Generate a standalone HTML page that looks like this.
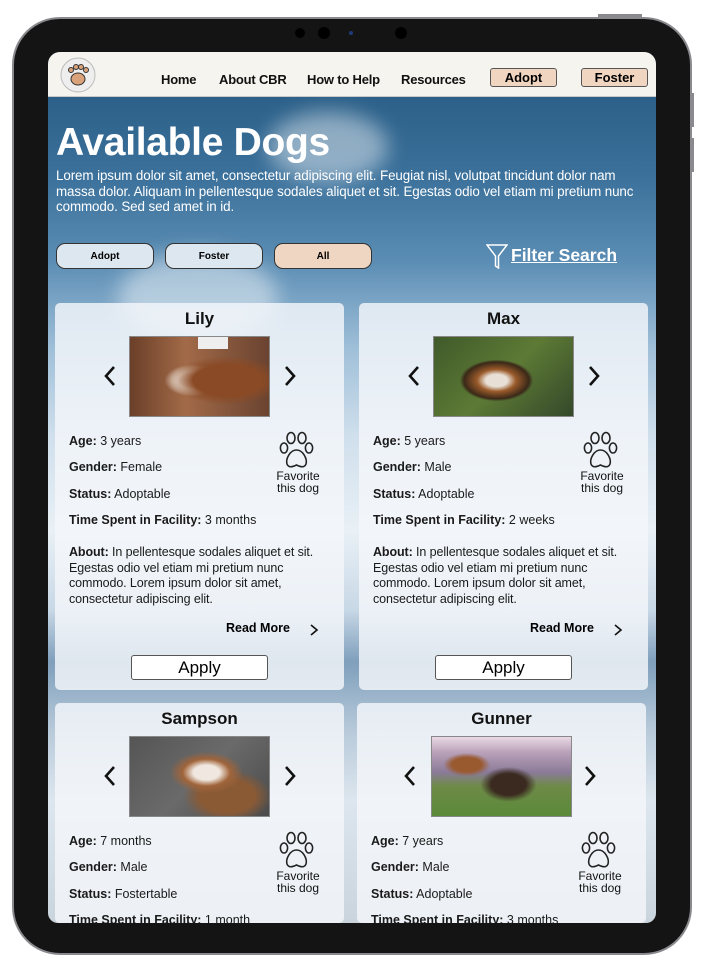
<!DOCTYPE html>
<html><head><meta charset="utf-8"><style>
*{margin:0;padding:0;box-sizing:border-box}
html,body{width:706px;height:968px;background:#fff;overflow:hidden;font-family:"Liberation Sans",sans-serif;position:relative}
.dev{position:absolute;left:12px;top:17px;width:680px;height:938px;border-radius:48px;background:#141414;border:2px solid #8a8a8e}
.btn-side{position:absolute;background:#8a8a8e}
.screen{position:absolute;left:48px;top:52px;width:608px;height:871px;border-radius:12px 12px 10px 10px;overflow:hidden;
background:linear-gradient(180deg,#24577f 0%,#3a709a 14%,#5b8db4 24%,#9fbfd8 34%,#cfdfec 44%,#e9f0f6 55%,#c8d8e6 64%,#7f9fbc 70%,#b8cada 78%,#dde6ee 86%,#c9d4dc 100%)}
.cloud{position:absolute;border-radius:50%;background:rgba(255,255,255,.45);filter:blur(10px)}
.nav{position:absolute;left:0;top:0;width:608px;height:45px;background:#f6f4ee;border-bottom:1px solid #c9c9c9}
.nav a{position:absolute;top:20px;font-size:13px;font-weight:bold;color:#111;letter-spacing:-.2px}
.nb{position:absolute;top:16px;width:67px;height:19px;background:#f0d6c0;border:1px solid #555;border-radius:3px;font-size:13px;font-weight:bold;text-align:center;line-height:17px}
h1{position:absolute;left:8px;top:69px;font-size:39px;color:#fff;font-weight:bold;letter-spacing:-.3px}
.intro{position:absolute;left:8px;top:116px;width:598px;font-size:13.4px;line-height:15.5px;color:#fff;letter-spacing:-.1px;white-space:nowrap}
.pill{position:absolute;top:191px;width:98px;height:26px;border:1px solid #333;border-radius:9px;background:#dde7f0;font-size:10px;font-weight:bold;text-align:center;line-height:26px}
.fs{position:absolute;left:463px;top:193px;font-size:17.5px;font-weight:bold;color:#fff;text-decoration:underline}
.card{position:absolute;width:289px;height:387px;background:rgba(244,247,250,.82);border-radius:5px;overflow:hidden}
.card.bt{height:220px}
.card .nm{position:absolute;left:0;width:100%;top:6px;text-align:center;font-size:17px;font-weight:bold;color:#111}
.card .ph{position:absolute;left:74px;top:33px;width:141px;height:81px;border:1px solid #888;overflow:hidden}
.card .ar{position:absolute;top:60px;width:16px;height:26px}
.card .inf{position:absolute;left:14px;font-size:12.5px;color:#1a1a1a;white-space:nowrap}
.card b{font-weight:bold}
.card .ab{position:absolute;left:14px;top:242px;width:272px;font-size:12.5px;line-height:15.5px;color:#1a1a1a;letter-spacing:-.1px}
.card .rm{position:absolute;left:171px;top:318px;font-size:12.5px;font-weight:bold}
.card .ch{position:absolute;left:254px;top:320px}
.card .ap{position:absolute;left:76px;top:352px;width:137px;height:25px;background:#fff;border:1px solid #555;border-radius:3px;text-align:center;font-size:17px;line-height:24px}
.card .paw{position:absolute;left:224px;top:128px}
.card .fv{position:absolute;left:217px;top:168px;width:52px;text-align:center;font-size:12px;line-height:11.5px;color:#111}
</style></head><body>
<div class="dev"></div>
<div class="btn-side" style="left:598px;top:14px;width:44px;height:4px"></div>
<div class="btn-side" style="left:690px;top:93px;width:4px;height:34px"></div>
<div class="btn-side" style="left:690px;top:138px;width:4px;height:34px"></div>
<div style="position:absolute;left:295px;top:28px;width:10px;height:10px;border-radius:50%;background:#000"></div>
<div style="position:absolute;left:318px;top:27px;width:12px;height:12px;border-radius:50%;background:#000"></div>
<div style="position:absolute;left:349px;top:31px;width:4px;height:4px;border-radius:50%;background:#1f3a7a"></div>
<div style="position:absolute;left:395px;top:27px;width:12px;height:12px;border-radius:50%;background:#000"></div>

<svg width="0" height="0" style="position:absolute;left:0;top:0"><defs>
<symbol id="paw" viewBox="0 0 36 42"><g fill="none" stroke="#222" stroke-width="1.6"><ellipse cx="12" cy="7" rx="4" ry="5.5"/><ellipse cx="23" cy="7" rx="4" ry="5.5"/><ellipse cx="5" cy="17" rx="3.6" ry="5"/><ellipse cx="30" cy="17" rx="3.6" ry="5"/><path d="M17.5 19C11 19 6.5 28 8 33C9.5 37 13.5 36 17.5 34C21.5 36 25.5 37 27 33C28.5 28 24 19 17.5 19Z"/></g></symbol>
<symbol id="la" viewBox="0 0 16 26"><path d="M12 4L4 13L12 22" fill="none" stroke="#111" stroke-width="2.6"/></symbol>
<symbol id="ra" viewBox="0 0 16 26"><path d="M4 4L12 13L4 22" fill="none" stroke="#111" stroke-width="2.6"/></symbol>
</defs></svg>

<div class="screen">
 <div class="cloud" style="left:220px;top:60px;width:120px;height:70px"></div>
 <div class="cloud" style="left:70px;top:200px;width:160px;height:90px"></div>
 <div class="nav">
  <svg style="position:absolute;left:8px;top:4px" width="44" height="38" viewBox="0 0 44 38"><circle cx="22" cy="19" r="17" fill="#eee" stroke="#bbb"/><ellipse cx="22" cy="23" rx="7" ry="6" fill="#d9a27a" stroke="#333"/><circle cx="15" cy="14" r="2.5" fill="#d9a27a" stroke="#333"/><circle cx="20" cy="11" r="2.5" fill="#d9a27a" stroke="#333"/><circle cx="25" cy="11" r="2.5" fill="#d9a27a" stroke="#333"/><circle cx="30" cy="14" r="2.5" fill="#d9a27a" stroke="#333"/></svg>
  <a style="left:113px">Home</a><a style="left:171px">About CBR</a><a style="left:259px">How to Help</a><a style="left:353px">Resources</a>
  <div class="nb" style="left:442px">Adopt</div><div class="nb" style="left:533px">Foster</div>
 </div>
 <h1>Available Dogs</h1>
 <div class="intro">Lorem ipsum dolor sit amet, consectetur adipiscing elit. Feugiat nisl, volutpat tincidunt dolor nam<br>massa dolor. Aliquam in pellentesque sodales aliquet et sit. Egestas odio vel etiam mi pretium nunc<br>commodo. Sed sed amet in id.</div>
 <div class="pill" style="left:8px">Adopt</div>
 <div class="pill" style="left:117px">Foster</div>
 <div class="pill" style="left:226px;background:#efd6c2">All</div>
 <svg style="position:absolute;left:438px;top:192px" width="22" height="25" viewBox="0 0 22 25"><path d="M1 1H21L12.5 12V24L9.5 22V12Z" fill="none" stroke="#fff" stroke-width="1.5"/></svg>
 <div class="fs">Filter Search</div>

<div class="card" style="left:7px;top:251px">
 <div class="nm">Lily</div>
 <div class="ph" style="background:radial-gradient(ellipse at 70% 55%,#8a4a25 0 25%,transparent 40%),radial-gradient(ellipse at 45% 55%,#e8dcd0 0 14%,transparent 26%),linear-gradient(90deg,#6b3f28,#a26a48 40%,#6a4330)"><div style="position:absolute;left:68px;top:0;width:30px;height:12px;background:#eee"></div></div>
 <svg class="ar" style="left:47px"><use href="#la"/></svg><svg class="ar" style="left:227px"><use href="#ra"/></svg>
 <div class="inf" style="top:131px"><b>Age:</b> 3 years</div>
 <div class="inf" style="top:157px"><b>Gender:</b> Female</div>
 <div class="inf" style="top:184px"><b>Status:</b> Adoptable</div>
 <div class="inf" style="top:210px"><b>Time Spent in Facility:</b> 3 months</div>
 <svg class="paw" width="36" height="42"><use href="#paw"/></svg>
 <div class="fv">Favorite this dog</div>
 <div class="ab"><b>About:</b> In pellentesque sodales aliquet et sit. Egestas odio vel etiam mi pretium nunc commodo. Lorem ipsum dolor sit amet, consectetur adipiscing elit.</div>
 <div class="rm">Read More</div><svg class="ch" width="10" height="14"><path d="M2 2L8 7L2 12" fill="none" stroke="#111" stroke-width="1.6"/></svg>
 <div class="ap">Apply</div>
</div>

<div class="card" style="left:311px;top:251px">
 <div class="nm">Max</div>
 <div class="ph" style="background:radial-gradient(ellipse at 45% 55%,#e8e0d6 0 10%,#9a5a2a 18%,#3a2818 30%,transparent 34%),linear-gradient(135deg,#3f5a2a,#5d7a35 50%,#34482a)"></div>
 <svg class="ar" style="left:47px"><use href="#la"/></svg><svg class="ar" style="left:227px"><use href="#ra"/></svg>
 <div class="inf" style="top:131px"><b>Age:</b> 5 years</div>
 <div class="inf" style="top:157px"><b>Gender:</b> Male</div>
 <div class="inf" style="top:184px"><b>Status:</b> Adoptable</div>
 <div class="inf" style="top:210px"><b>Time Spent in Facility:</b> 2 weeks</div>
 <svg class="paw" width="36" height="42"><use href="#paw"/></svg>
 <div class="fv">Favorite this dog</div>
 <div class="ab"><b>About:</b> In pellentesque sodales aliquet et sit. Egestas odio vel etiam mi pretium nunc commodo. Lorem ipsum dolor sit amet, consectetur adipiscing elit.</div>
 <div class="rm">Read More</div><svg class="ch" width="10" height="14"><path d="M2 2L8 7L2 12" fill="none" stroke="#111" stroke-width="1.6"/></svg>
 <div class="ap">Apply</div>
</div>

<div class="card bt" style="left:7px;top:651px">
 <div class="nm">Sampson</div>
 <div class="ph" style="background:radial-gradient(ellipse at 55% 45%,#f0e8e0 0 12%,#a0643a 22%,transparent 34%),radial-gradient(ellipse at 70% 75%,#8a5a35 0 20%,transparent 32%),linear-gradient(135deg,#555 ,#6a6a6a 50%,#4a4a4a)"></div>
 <svg class="ar" style="left:47px"><use href="#la"/></svg><svg class="ar" style="left:227px"><use href="#ra"/></svg>
 <div class="inf" style="top:131px"><b>Age:</b> 7 months</div>
 <div class="inf" style="top:157px"><b>Gender:</b> Male</div>
 <div class="inf" style="top:184px"><b>Status:</b> Fostertable</div>
 <div class="inf" style="top:210px"><b>Time Spent in Facility:</b> 1 month</div>
 <svg class="paw" width="36" height="42"><use href="#paw"/></svg>
 <div class="fv">Favorite this dog</div>
</div>

<div class="card bt" style="left:309px;top:651px">
 <div class="nm">Gunner</div>
 <div class="ph" style="background:radial-gradient(ellipse at 55% 60%,#3a2a20 0 16%,transparent 26%),radial-gradient(ellipse at 25% 35%,#9a5a30 0 10%,transparent 16%),linear-gradient(180deg,#e8d8e4 0%,#b8a0b8 20%,#8a7a98 45%,#6e8a48 62%,#5a8a38 100%)"></div>
 <svg class="ar" style="left:45px"><use href="#la"/></svg><svg class="ar" style="left:225px"><use href="#ra"/></svg>
 <div class="inf" style="top:131px"><b>Age:</b> 7 years</div>
 <div class="inf" style="top:157px"><b>Gender:</b> Male</div>
 <div class="inf" style="top:184px"><b>Status:</b> Adoptable</div>
 <div class="inf" style="top:210px"><b>Time Spent in Facility:</b> 3 months</div>
 <svg class="paw" width="36" height="42"><use href="#paw"/></svg>
 <div class="fv">Favorite this dog</div>
</div>
</div>
</body></html>
